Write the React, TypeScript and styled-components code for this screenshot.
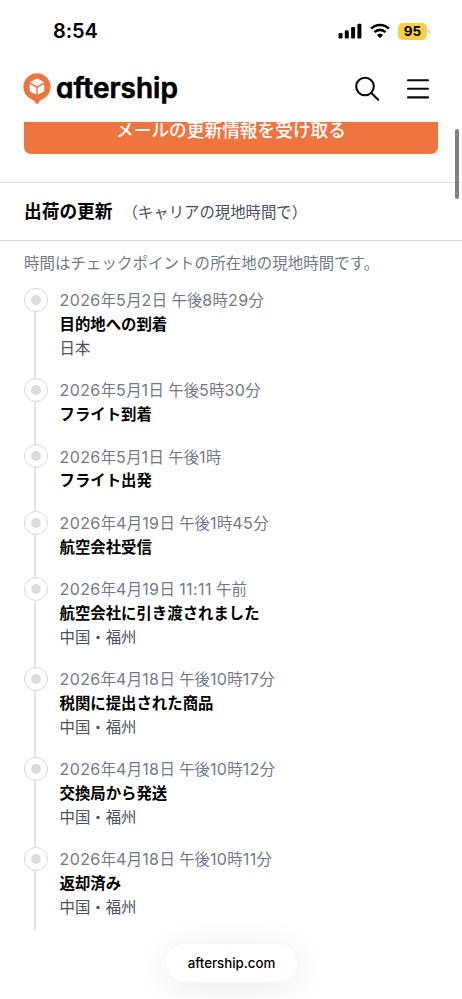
import React from "react";
import styled, { createGlobalStyle } from "styled-components";

const GlobalStyle = createGlobalStyle`
  *, *::before, *::after { box-sizing: border-box; }
  html, body { margin: 0; padding: 0; background: #fff; }
  body { overflow: hidden; }
`;

const Screen = styled.div`
  position: relative;
  width: 462px;
  height: 999px;
  display: flex;
  flex-direction: column;
  overflow: hidden;
  background: #fff;
  color: #000;
  font-family: Inter, "Noto Sans CJK JP", sans-serif;
`;

const StatusBar = styled.header`
  flex: none;
  height: 62px;
  padding: 0 32px 0 53px;
  display: flex;
  justify-content: space-between;
`;

const Clock = styled.time`
  margin-top: 19px;
  font-size: 20px;
  line-height: 24px;
  font-weight: 600;
  letter-spacing: -0.1px;
`;

const StatusIcons = styled.div`
  display: flex;
  height: 18px;
  margin-top: 22px;
  align-items: center;
`;

const SignalIcon = styled.svg`
  width: 24px;
  height: 16px;
  margin-right: 8px;
`;

const WifiIcon = styled.svg`
  width: 20px;
  height: 16px;
  margin-right: 8px;
`;

const Battery = styled.div`
  width: 29px;
  height: 17px;
  border-radius: 5px;
  background: #f7ce46;
  font-size: 13.5px;
  line-height: 17px;
  font-weight: 700;
  text-align: center;
`;

const BatteryCap = styled.div`
  width: 2px;
  height: 5px;
  margin-left: 1px;
  border-radius: 0 2px 2px 0;
  background: #d5d5d7;
`;

const NavBar = styled.nav`
  flex: none;
  height: 60px;
  padding: 0 32px 0 23px;
  display: flex;
  justify-content: space-between;
`;

const Brand = styled.div`
  display: flex;
`;

const BrandMark = styled.svg`
  width: 28px;
  height: 32px;
  margin-top: 11px;
`;

const BrandName = styled.span`
  margin: 9px 0 0 5px;
  font-size: 28px;
  line-height: 34px;
  font-weight: 600;
  letter-spacing: 0;
  font-feature-settings: "cv11";
  -webkit-text-stroke: 0.6px #000;
`;

const NavActions = styled.div`
  display: flex;
  gap: 26px;
  margin-top: 14px;
`;

const NavIcon = styled.svg<{ $width: number }>`
  width: ${(p) => p.$width}px;
  height: 26px;
  fill: none;
  stroke: #0a0a0a;
  stroke-width: 2.1;
  stroke-linecap: round;
`;

const ButtonRegion = styled.div`
  flex: none;
  height: 61px;
  padding: 0 24px;
  overflow: hidden;
  border-bottom: 1px solid #e2e2e5;
`;

const SubscribeButton = styled.button`
  display: block;
  width: 100%;
  height: 47.5px;
  margin: -16px 0 0;
  padding: 2px 0 0;
  border: 0;
  border-radius: 7px;
  background: #ee7440;
  color: #fff;
  font: 500 17.7px/44px Inter, "Noto Sans CJK JP", sans-serif;
`;

const SectionHeader = styled.div`
  flex: none;
  height: 58px;
  padding: 1px 24px 0;
  display: flex;
  align-items: center;
  border-bottom: 1px solid #d3d5dd;
  white-space: nowrap;
`;

const SectionTitle = styled.h2`
  margin: 0;
  font-size: 17.7px;
  font-weight: 700;
  line-height: 26px;
`;

const SectionHint = styled.span`
  margin: 2px 0 0 10px;
  font-size: 15.4px;
  line-height: 24px;
  color: #4b5162;
`;

const Notice = styled.p`
  flex: none;
  margin: 11px 24px 12px;
  font-size: 15.4px;
  line-height: 24px;
  letter-spacing: 0.12px;
  color: #747988;
`;

const Timeline = styled.ol`
  flex: none;
  margin: 0;
  padding: 0 0 0 23.5px;
  list-style: none;
`;

const Checkpoint = styled.li`
  display: flex;
  gap: 12px;
`;

const Rail = styled.div`
  width: 24px;
  display: flex;
  flex-direction: column;
  align-items: center;

  &::after {
    content: "";
    flex: 1;
    width: 2px;
    margin-right: 1px;
    background: #e5e5e8;
  }
`;

const Marker = styled.span`
  flex: none;
  width: 24px;
  height: 24px;
  display: grid;
  place-items: center;
  border: 1.2px solid #d6d7df;
  border-radius: 50%;

  &::before {
    content: "";
    width: 10px;
    height: 10px;
    border-radius: 50%;
    background: #dcdcdc;
  }
`;

const Details = styled.div<{ $last: boolean }>`
  padding-top: 1.2px;
  padding-bottom: ${(p) => (p.$last ? 11 : 17.75)}px;
  font-size: 15.4px;
  line-height: 23.69px;
  white-space: nowrap;
`;

const Stamp = styled.div`
  height: 23.69px;
  color: #747988;
`;

const Digits = styled.span`
  font-size: 16px;
  letter-spacing: 0.4px;
`;

const Event = styled.div`
  height: 23.69px;
  font-weight: 700;
`;

const Place = styled.div`
  height: 23.69px;
  color: #4b5162;
`;

const ScrollThumb = styled.div`
  position: absolute;
  top: 129px;
  right: 3px;
  width: 4px;
  height: 70px;
  border-radius: 2px;
  background: #808080;
`;

const AddressPill = styled.div`
  position: absolute;
  left: 166px;
  top: 944px;
  width: 131px;
  height: 38px;
  border-radius: 19px;
  background: #fff;
  box-shadow: 0 5px 36px rgba(0, 0, 0, 0.09);
  font-size: 13.3px;
  line-height: 38px;
  font-weight: 500;
  text-align: center;
`;

const checkpoints: { stamp: string; event: string; place?: string }[] = [
  { stamp: "2026年5月2日 午後8時29分", event: "目的地への到着", place: "日本" },
  { stamp: "2026年5月1日 午後5時30分", event: "フライト到着" },
  { stamp: "2026年5月1日 午後1時", event: "フライト出発" },
  { stamp: "2026年4月19日 午後1時45分", event: "航空会社受信" },
  { stamp: "2026年4月19日 11:11 午前", event: "航空会社に引き渡されました", place: "中国・福州" },
  { stamp: "2026年4月18日 午後10時17分", event: "税関に提出された商品", place: "中国・福州" },
  { stamp: "2026年4月18日 午後10時12分", event: "交換局から発送", place: "中国・福州" },
  { stamp: "2026年4月18日 午後10時11分", event: "返却済み", place: "中国・福州" },
];

// Digits are set slightly larger and wider than the surrounding kanji.
const StampText = ({ value }: { value: string }) => (
  <Stamp>
    {value.split(/([\d:]+)/).map((part, i) => (i % 2 ? <Digits key={i}>{part}</Digits> : part))}
  </Stamp>
);

export default function App() {
  return (
    <>
      <GlobalStyle />
      <Screen lang="ja">
        <StatusBar>
          <Clock>8:54</Clock>
          <StatusIcons>
            <SignalIcon viewBox="0 0 24 16">
              <rect x="0.5" y="10" width="4" height="5.5" rx="1.2" />
              <rect x="6.8" y="7.3" width="4" height="8.2" rx="1.2" />
              <rect x="13.1" y="4" width="4" height="11.5" rx="1.2" />
              <rect x="19.4" y="0.8" width="4" height="14.7" rx="1.2" />
            </SignalIcon>
            <WifiIcon viewBox="0 0 20 16" fill="none" stroke="#000" strokeWidth="2.6">
              <path d="M1.2 5.6a12.6 12.6 0 0 1 17.6 0" />
              <path d="M4.5 9.1a7.9 7.9 0 0 1 11 0" />
              <path d="M10 15.2 6.9 12.1a4.4 4.4 0 0 1 6.2 0Z" fill="#000" stroke="none" />
            </WifiIcon>
            <Battery>95</Battery>
            <BatteryCap />
          </StatusIcons>
        </StatusBar>

        <NavBar>
          <Brand>
            <BrandMark viewBox="0 0 28 32">
              <path
                d="M14 .2a13.7 13.7 0 0 1 4.8 26.5c-1.5.6-2.7 2-4.4 4.3q-.4.5-.8 0c-1.7-2.3-2.9-3.7-4.4-4.3A13.7 13.7 0 0 1 14 .2Z"
                fill="#ee7440"
              />
              <path d="M14 5.8 20.5 9.3 14 12.7 7.5 9.3Z" fill="#fff" stroke="#fff" strokeWidth=".8" strokeLinejoin="round" />
              <path d="M7 11.6 13 14.8V21.2L7.5 18.4Q7 18.1 7 17.5Z" fill="#fff" stroke="#fff" strokeWidth=".6" strokeLinejoin="round" />
              <path d="M21 11.6 15 14.8V21.2L20.5 18.4Q21 18.1 21 17.5Z" fill="#fff" stroke="#fff" strokeWidth=".6" strokeLinejoin="round" />
            </BrandMark>
            <BrandName>aftership</BrandName>
          </Brand>
          <NavActions>
            <NavIcon $width={26} viewBox="0 0 26 26">
              <circle cx="11" cy="10.5" r="8.8" />
              <path d="m17.4 16.9 6.8 6.8" />
            </NavIcon>
            <NavIcon $width={24} viewBox="0 0 24 26">
              <path d="M2 4.2h20M2 12.8h20M2 21.4h20" />
            </NavIcon>
          </NavActions>
        </NavBar>

        <ButtonRegion>
          <SubscribeButton>メールの更新情報を受け取る</SubscribeButton>
        </ButtonRegion>

        <SectionHeader>
          <SectionTitle>出荷の更新</SectionTitle>
          <SectionHint>（キャリアの現地時間で）</SectionHint>
        </SectionHeader>

        <Notice>時間はチェックポイントの所在地の現地時間です。</Notice>

        <Timeline>
          {checkpoints.map((item, index) => (
            <Checkpoint key={item.stamp}>
              <Rail>
                <Marker />
              </Rail>
              <Details $last={index === checkpoints.length - 1}>
                <StampText value={item.stamp} />
                <Event>{item.event}</Event>
                {item.place && <Place>{item.place}</Place>}
              </Details>
            </Checkpoint>
          ))}
        </Timeline>

        <ScrollThumb />
        <AddressPill>aftership.com</AddressPill>
      </Screen>
    </>
  );
}
